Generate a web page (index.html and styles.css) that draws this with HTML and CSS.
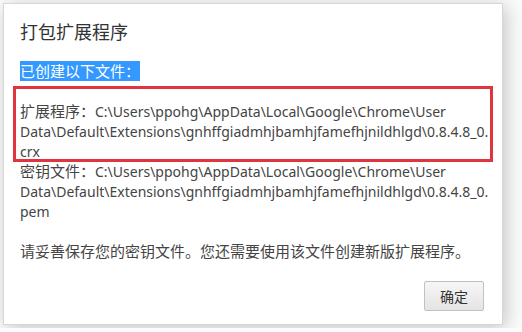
FILE: index.html
```html
<!DOCTYPE html>
<html lang="zh-CN">
<head>
  <meta charset="UTF-8" />
  <title>打包扩展程序</title>
  <link rel="stylesheet" href="styles.css">
</head>
<body>

  <div class="dialog">
    <h1 class="title">打包扩展程序</h1>

    <div class="content">
      <p><span class="selected">已创建以下文件：</span></p>
      <p class="blank"></p>
      <p class="file marked">扩展程序：<span class="path">C:\Users\ppohg\AppData\Local\Google\Chrome\User Data\Default\Extensions\gnhffgiadmhjbamhjfamefhjnildhlgd\0.8.4.8_0.crx</span></p>
      <p class="file">密钥文件：<span class="path">C:\Users\ppohg\AppData\Local\Google\Chrome\User Data\Default\Extensions\gnhffgiadmhjbamhjfamefhjnildhlgd\0.8.4.8_0.pem</span></p>
      <p class="blank"></p>
      <p>请妥善保存您的密钥文件。您还需要使用该文件创建新版扩展程序。</p>
    </div>

    <div class="buttons">
      <button>确定</button>
    </div>
  </div>

</body>
</html>
```

FILE: styles.css
```css
* {
  margin: 0;
  padding: 0;
  box-sizing: border-box;
  font-family: 'Noto Sans', 'Noto Sans CJK SC', sans-serif;
}

body {
  background-color: #fbfbfb;
  color: #333;
  padding: 3px;
}

.dialog {
  width: 500px;
  height: 322px;
  background-color: white;
  border: 1px solid #d6d6d6;
  box-shadow: 3px 3px 18px rgba(0, 0, 0, 0.22);
  padding: 16px 12px 0 16px;
  display: flex;
  flex-direction: column;
}

.title {
  font-size: 18px;
  font-weight: normal;
  line-height: 24px;
  color: #333;
}

.content {
  margin-top: 17px;
  font-size: 15px;
  line-height: 20px;
  color: #444;
}

.content p {
  overflow-wrap: anywhere;
}

.path {
  font-size: 14px;
  line-height: 16px;
}

.blank {
  height: 20px;
}

.selected {
  background-color: #3399ff;
  color: white;
}

.marked {
  position: relative;
}

.marked::before {
  content: "";
  position: absolute;
  left: -7px;
  right: -3px;
  top: -15px;
  bottom: -1px;
  border: 3px solid #e0343f;
}

.buttons {
  margin-top: auto;
  margin-bottom: 13px;
  margin-right: 6px;
  display: flex;
  justify-content: flex-end;
}

button {
  width: 60px;
  height: 30px;
  font-size: 14px;
  color: #333;
  background: linear-gradient(#f6f6f6, #e4e4e4);
  border: 1px solid #c2c2c2;
  border-radius: 2px;
}
```
